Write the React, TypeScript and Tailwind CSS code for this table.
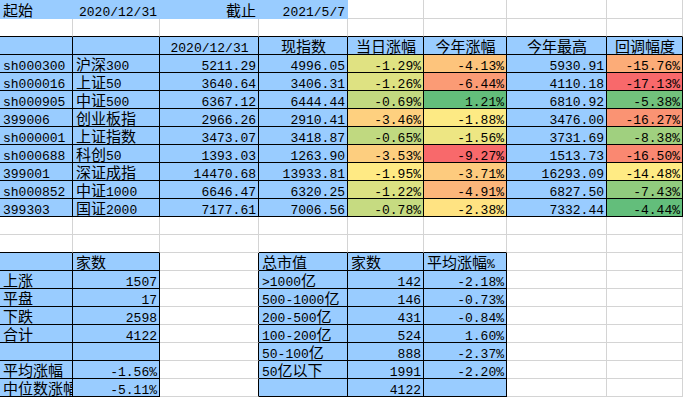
import React from "react";

type Cell = { t?: string; a?: "l" | "r" | "c"; fill?: "blue" | "heat"; box?: boolean; v?: number; scale?: "de" | "h"; clip?: boolean };

const RED = [248, 105, 107];
const YEL = [255, 235, 132];
const GRN = [99, 190, 123];

const indices = [
  ["sh000300", "沪深300", "5211.29", "4996.05", -1.29, -4.13, "5930.91", -15.76],
  ["sh000016", "上证50", "3640.64", "3406.31", -1.26, -6.44, "4110.18", -17.13],
  ["sh000905", "中证500", "6367.12", "6444.44", -0.69, 1.21, "6810.92", -5.38],
  ["399006", "创业板指", "2966.26", "2910.41", -3.46, -1.88, "3476.00", -16.27],
  ["sh000001", "上证指数", "3473.07", "3418.87", -0.65, -1.56, "3731.69", -8.38],
  ["sh000688", "科创50", "1393.03", "1263.90", -3.53, -9.27, "1513.73", -16.5],
  ["399001", "深证成指", "14470.68", "13933.81", -1.95, -3.71, "16293.09", -14.48],
  ["sh000852", "中证1000", "6646.47", "6320.25", -1.22, -4.91, "6827.50", -7.43],
  ["399303", "国证2000", "7177.61", "7006.56", -0.78, -2.38, "7332.44", -4.44],
] as const;

// excel style 3-colour scale: min red, 50th percentile yellow, max green
function stats(vals: number[]) {
  const s = [...vals].sort((a, b) => a - b);
  const n = s.length;
  const pos = (n - 1) * 0.5;
  const lo = Math.floor(pos);
  const mid = s[lo] + (s[Math.ceil(pos)] - s[lo]) * (pos - lo);
  return { min: s[0], mid, max: s[n - 1] };
}

const deStats = stats(indices.flatMap((r) => [r[4] as number, r[5] as number]));
const hStats = stats(indices.map((r) => r[7] as number));

function heat(v: number, scale: "de" | "h") {
  const { min, mid, max } = scale === "de" ? deStats : hStats;
  let a = RED, b = YEL, t = 0;
  if (v <= mid) {
    t = (v - min) / (mid - min);
  } else {
    a = YEL;
    b = GRN;
    t = (v - mid) / (max - mid);
  }
  const c = a.map((x, i) => Math.round(x + (b[i] - x) * t));
  return `rgb(${c[0]},${c[1]},${c[2]})`;
}

const pct = (v: number) => `${v.toFixed(2)}%`;
const E: Cell = {};
const B = (t = "", a: Cell["a"] = "l"): Cell => ({ t, a, fill: "blue", box: true });

const rows: Cell[][] = [
  [
    { t: "起始", a: "l", fill: "blue" },
    { t: "2020/12/31", a: "r", fill: "blue" },
    { t: "截止", a: "r", fill: "blue" },
    { t: "2021/5/7", a: "r", fill: "blue" },
    E, E, E, E,
  ],
  [E, E, E, E, E, E, E, E],
  [B(), B(), B("2020/12/31", "c"), B("现指数", "c"), B("当日涨幅", "c"), B("今年涨幅", "c"), B("今年最高", "c"), B("回调幅度", "c")],
  ...indices.map((r): Cell[] => [
    B(r[0]),
    B(r[1]),
    B(r[2], "r"),
    B(r[3], "r"),
    { t: pct(r[4]), a: "r", fill: "heat", box: true, v: r[4], scale: "de" },
    { t: pct(r[5]), a: "r", fill: "heat", box: true, v: r[5], scale: "de" },
    B(r[6], "r"),
    { t: pct(r[7]), a: "r", fill: "heat", box: true, v: r[7], scale: "h" },
  ]),
  [E, E, E, E, E, E, E, E],
  [E, E, E, E, E, E, E, E],
  [B(), B("家数"), E, B("总市值"), B("家数"), B("平均涨幅%"), E, E],
  [B("上涨"), B("1507", "r"), E, B(">1000亿"), B("142", "r"), B("-2.18%", "r"), E, E],
  [B("平盘"), B("17", "r"), E, B("500-1000亿"), B("146", "r"), B("-0.73%", "r"), E, E],
  [B("下跌"), B("2598", "r"), E, B("200-500亿"), B("431", "r"), B("-0.84%", "r"), E, E],
  [B("合计"), B("4122", "r"), E, B("100-200亿"), B("524", "r"), B("1.60%", "r"), E, E],
  [B(), B(), E, B("50-100亿"), B("888", "r"), B("-2.37%", "r"), E, E],
  [B("平均涨幅"), B("-1.56%", "r"), E, B("50亿以下"), B("1991", "r"), B("-2.20%", "r"), E, E],
  [{ ...B("中位数涨幅"), clip: true }, B("-5.11%", "r"), E, B(), B("4122", "r"), B(), E, E],
];

const rightCls = { black: "border-r-black", gray: "border-r-[#d4d4d4]", blue: "border-r-[#99ccff]" };
const bottomCls = { black: "border-b-black", gray: "border-b-[#d4d4d4]", blue: "border-b-[#99ccff]" };

function edge(a: Cell, b?: Cell): "black" | "gray" | "blue" {
  if (a.box || b?.box) return "black";
  if (a.fill === "blue" || b?.fill === "blue") return "blue";
  return "gray";
}

function Txt({ s }: { s: string }) {
  const parts = s.match(/[\u3400-\u9fff]+|[^\u3400-\u9fff]+/g) ?? [];
  return (
    <>
      {parts.map((p, i) =>
        /[\u3400-\u9fff]/.test(p) ? (
          <span key={i} className="font-['Noto_Sans_CJK_SC',sans-serif] text-[15px] leading-[10px]">
            {p}
          </span>
        ) : (
          <span key={i}>{p}</span>
        )
      )}
    </>
  );
}

export default function App() {
  return (
    <div className="w-[683px] h-[397px] overflow-hidden bg-white text-black font-['Liberation_Mono',monospace] text-[13px] leading-[10px]">
      <div className="grid grid-cols-[73px_87px_99px_89px_76px_83px_100px_76px] grid-rows-[19px_repeat(21,18px)]">
        {rows.map((row, r) =>
          row.map((cell, c) => {
            const right = edge(cell, row[c + 1]);
            const bottom = edge(cell, rows[r + 1]?.[c]);
            const align =
              cell.a === "r" ? "justify-end" : cell.a === "c" ? "justify-center" : "justify-start";
            return (
              <div
                key={`${r}-${c}`}
                className={`flex items-end whitespace-nowrap border-r border-b pl-[3px] pr-[2px] ${align} ${rightCls[right]} ${bottomCls[bottom]} ${
                  cell.fill === "blue" ? "bg-[#99ccff]" : ""
                } ${cell.clip ? "overflow-hidden" : ""}`}
                style={cell.fill === "heat" && cell.v !== undefined && cell.scale ? { backgroundColor: heat(cell.v, cell.scale) } : undefined}
              >
                {cell.t ? <span className="block"><Txt s={cell.t} /></span> : null}
              </div>
            );
          })
        )}
      </div>
    </div>
  );
}
